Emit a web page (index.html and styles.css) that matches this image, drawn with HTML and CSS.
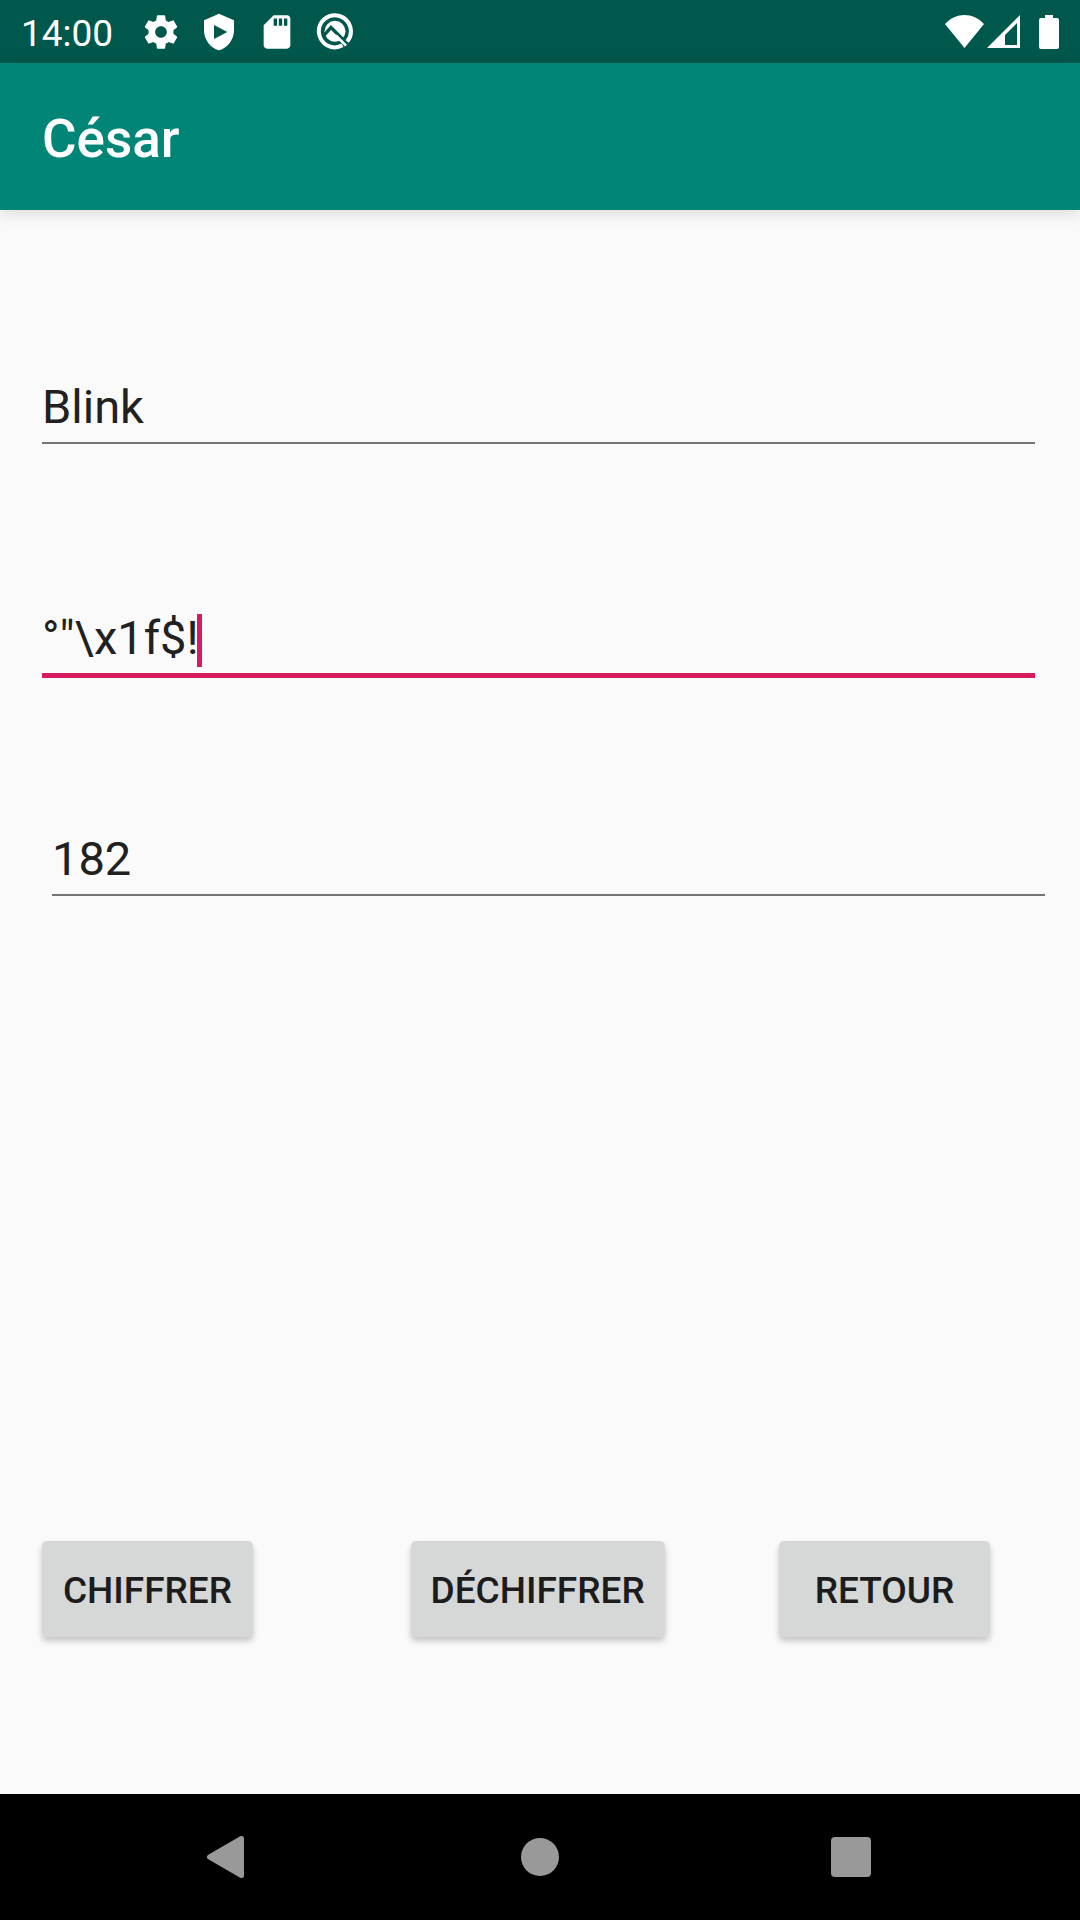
FILE: index.html
```html
<!DOCTYPE html>
<html lang="fr">
<head>
<meta charset="utf-8">
<meta name="viewport" content="width=device-width, initial-scale=1">
<title>César</title>
<link rel="stylesheet" href="styles.css">
</head>
<body>
<div class="status-bar">
  <time class="clock" datetime="14:00">14:00</time>
  <div class="notifications">
    <svg class="icon" viewBox="0 0 24 24" aria-hidden="true"><path d="M19.43 12.98c.04-.32.07-.64.07-.98s-.03-.66-.07-.98l2.11-1.65c.19-.15.24-.42.12-.64l-2-3.46c-.12-.22-.39-.3-.61-.22l-2.49 1c-.52-.4-1.08-.73-1.69-.98l-.38-2.65C14.46 2.18 14.25 2 14 2h-4c-.25 0-.46.18-.49.42l-.38 2.65c-.61.25-1.17.59-1.69.98l-2.49-1c-.23-.09-.49 0-.61.22l-2 3.46c-.13.22-.07.49.12.64l2.11 1.65c-.04.32-.07.65-.07.98s.03.66.07.98l-2.11 1.65c-.19.15-.24.42-.12.64l2 3.46c.12.22.39.3.61.22l2.49-1c.52.4 1.08.73 1.69.98l.38 2.65c.03.24.24.42.49.42h4c.25 0 .46-.18.49-.42l.38-2.65c.61-.25 1.17-.59 1.69-.98l2.49 1c.23.09.49 0 .61-.22l2-3.46c.12-.22.07-.49-.12-.64l-2.11-1.65zM12 15.5c-1.93 0-3.5-1.57-3.5-3.5s1.57-3.5 3.5-3.5 3.5 1.57 3.5 3.5-1.57 3.5-3.5 3.5z"/></svg>
    <svg class="icon" viewBox="0 0 24 24" aria-hidden="true"><path fill-rule="evenodd" d="M12 1 3 5v6c0 5.55 3.84 10.74 9 12 5.16-1.26 9-6.45 9-12V5zM9 7.8l8 4.2-8 4.2z"/></svg>
    <svg class="icon" viewBox="0 0 24 24" aria-hidden="true"><path fill-rule="evenodd" d="M18 2h-8L4 8v12c0 1.100.9 2 2 2h12c1.100 0 2-.9 2-2V4c0-1.100-.9-2-2-2zM10 3.900h2v4.300h-2zM13.100 3.900h2v4.300h-2zM16.200 3.900h2v4.300h-2z"/></svg>
    <svg class="icon" viewBox="0 0 24 24" aria-hidden="true"><path class="ring" d="M16.500 20A9.600 9.600 0 1 1 19.300 17.700"/><circle cx="12" cy="11.600" r="6.300"/><path class="cut" d="M5 14.500 9.600 9.300 17.500 17.200"/><path class="tail" d="M12.500 14 18.600 20.200"/></svg>
  </div>
  <div class="system">
    <svg class="wifi" viewBox="0 0 39 33" aria-hidden="true"><path d="M0 9C11-3 28-3 39 9L19.500 33z"/></svg>
    <svg class="signal" viewBox="0 0 33 33" aria-hidden="true"><path fill-rule="evenodd" d="M33 0v33H0zM30 8 18 20v10h12z"/></svg>
    <svg class="battery" viewBox="0 0 20 34" aria-hidden="true"><path d="M6 0h8v3h4a2 2 0 0 1 2 2v27a2 2 0 0 1-2 2H2a2 2 0 0 1-2-2V5a2 2 0 0 1 2-2h4z"/></svg>
  </div>
</div>
<header class="app-bar"><h1 class="title">César</h1></header>
<main class="content">
  <form class="cipher">
    <div class="field"><input class="input" type="text" value="Blink" aria-label="Texte clair"></div>
    <div class="field field-active"><input class="input" type="text" value="°&quot;\x1f$!" aria-label="Texte chiffré"><span class="caret"></span></div>
    <div class="field field-key"><input class="input" type="text" inputmode="numeric" value="182" aria-label="Clé"></div>
    <div class="actions">
      <button class="action" type="button">CHIFFRER</button>
      <button class="action" type="button">DÉCHIFFRER</button>
      <button class="action" type="button">RETOUR</button>
    </div>
  </form>
</main>
<nav class="nav-bar">
  <button class="nav-button" type="button" aria-label="Précédent"><svg class="nav-icon" viewBox="0 0 48 48"><path class="back" d="M4.500 24 36.500 5.500v37z"/></svg></button>
  <button class="nav-button" type="button" aria-label="Accueil"><svg class="nav-icon" viewBox="0 0 48 48"><circle cx="24" cy="24" r="19"/></svg></button>
  <button class="nav-button" type="button" aria-label="Applications récentes"><svg class="nav-icon" viewBox="0 0 48 48"><rect x="4" y="4" width="40" height="40" rx="4"/></svg></button>
</nav>
</body>
</html>
```
FILE: styles.css
```css
* { box-sizing: border-box; }

body {
  margin: 0;
  min-height: 100vh;
  display: flex;
  flex-direction: column;
  background: #fafafa;
  color: #212121;
  font-family: Roboto, sans-serif;
}

.status-bar {
  height: 63px;
  padding: 0 21px;
  display: flex;
  align-items: center;
  background: #00574b;
  color: #fff;
  fill: #fff;
}

.clock {
  padding-top: 4px;
  font-size: 37px;
  line-height: 44px;
}

.notifications {
  margin-left: 28px;
  display: flex;
  gap: 18px;
}

.icon { width: 40px; height: 40px; }
.ring { fill: none; stroke: #fff; stroke-width: 2.4; }
.cut { fill: none; stroke: #00574b; stroke-width: 2; }
.tail { fill: none; stroke: #fff; stroke-width: 1.6; }

.system {
  margin-left: auto;
  display: flex;
  align-items: center;
}

.wifi { width: 39px; height: 33px; }
.signal { width: 33px; height: 33px; margin-left: 3px; }
.battery { width: 20px; height: 34px; margin-left: 19px; }

.app-bar {
  height: 147px;
  padding: 4px 42px 0;
  display: flex;
  align-items: center;
  background: #008577;
  color: #fff;
  box-shadow: 0 4px 14px rgba(0, 0, 0, 0.12);
}

.title {
  margin: 0;
  font-size: 53px;
  font-weight: 500;
  line-height: 62px;
}

.content {
  flex: 1;
  display: flex;
}

.cipher {
  flex: 1;
  min-width: 0;
  padding-top: 169px;
  display: flex;
  flex-direction: column;
}

.field {
  position: relative;
  margin: 0 45px 166px 42px;
  padding-bottom: 7px;
  border-bottom: 2px solid #757575;
}

.field-active {
  margin-bottom: 153px;
  border-bottom: 5px solid #d81b60;
}

.field-key { margin: 0 35px 0 52px; }

.input {
  display: block;
  width: 100%;
  height: 56px;
  padding: 0;
  border: 0;
  outline: 0;
  background: transparent;
  color: inherit;
  font: 47px/56px Roboto, sans-serif;
}

.caret {
  position: absolute;
  left: 155px;
  top: 4px;
  width: 5px;
  height: 53px;
  background: #d81b60;
}

.actions {
  margin-top: auto;
  padding: 60px 90px 157px 42px;
  display: grid;
  grid-template-columns: 1fr 1fr 211px;
  justify-items: start;
}

.action {
  min-width: 211px;
  height: 96px;
  padding: 4px 20px 0;
  border: 0;
  border-radius: 5px;
  background: #d6d7d7;
  color: #1c1c1c;
  font: 500 37px/44px Roboto, sans-serif;
  white-space: nowrap;
  box-shadow: 0 4px 6px rgba(0, 0, 0, 0.22);
}

.nav-bar {
  height: 126px;
  padding: 0 73px;
  display: grid;
  grid-template-columns: repeat(3, 1fr);
  background: #000;
}

.nav-button {
  padding: 0;
  border: 0;
  background: none;
  display: flex;
  align-items: center;
  justify-content: center;
}

.nav-icon { width: 48px; height: 48px; fill: #999; }
.back { stroke: #999; stroke-width: 5; stroke-linejoin: round; }
```
